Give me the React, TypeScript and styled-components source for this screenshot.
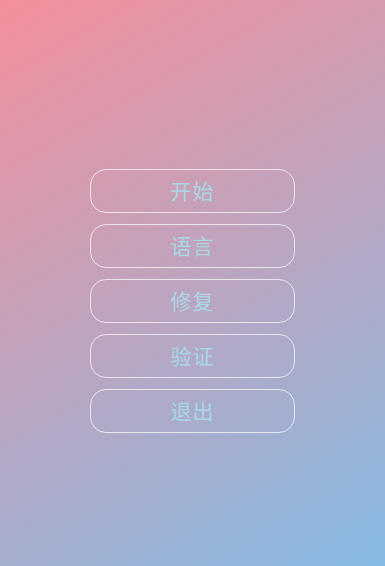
import styled, { createGlobalStyle } from 'styled-components';

const GlobalStyle = createGlobalStyle`
    html, body {
        margin: 0;
        padding: 0;
        height: 100%;
    }
    body {
        font-family: "Noto Sans CJK SC", "Noto Sans", sans-serif;
    }
    #root {
        height: 100%;
    }
`;

const Screen = styled.div`
    width: 100%;
    height: 100vh;
    background: linear-gradient(150deg, #f48f9b 0%, #85bae3 100%);
    display: flex;
    flex-direction: column;
    align-items: center;
    padding-top: 169px;
    box-sizing: border-box;
`;

const Menu = styled.div`
    display: flex;
    flex-direction: column;
    gap: 11px;
`;

const MenuButton = styled.button`
    width: 205px;
    height: 44px;
    box-sizing: border-box;
    border: 1px solid rgba(255, 255, 255, 0.7);
    border-radius: 16px;
    background: transparent;
    color: #a9d8e4;
    font-family: "Noto Sans CJK SC", "Noto Sans", sans-serif;
    font-size: 21px;
    letter-spacing: 1px;
    padding: 0 0 2px;
    cursor: pointer;
`;

const items = ['开始', '语言', '修复', '验证', '退出'];

export default function App() {
    return (
        <>
            <GlobalStyle />
            <Screen>
                <Menu>
                    {items.map((label) => (
                        <MenuButton key={label}>{label}</MenuButton>
                    ))}
                </Menu>
            </Screen>
        </>
    );
}
